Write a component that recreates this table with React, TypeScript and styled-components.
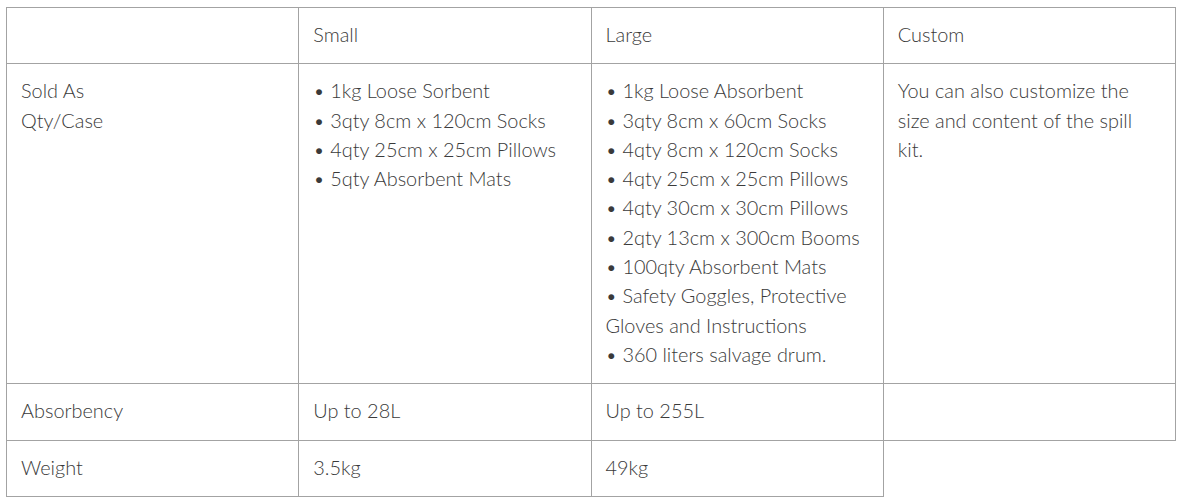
import React from "react";
import styled, { createGlobalStyle } from "styled-components";

const Global = createGlobalStyle`
  html, body { margin: 0; padding: 0; background: #fff; }
  body { font-family: "Lato", "Open Sans", sans-serif; }
`;

const Wrap = styled.div`
  padding: 7px 0 0 6px;
`;

const Table = styled.table`
  width: 1170px;
  table-layout: fixed;
  border-collapse: collapse;
  color: #3a3a3a;
  font-size: 19.9px;
  font-weight: 300;
  line-height: 29.3px;
`;

const Cell = styled.td`
  border: 1px solid #a3a3a3;
  padding: 12px 14px 14px 14px;
  vertical-align: top;
`;

const Line = styled.div``;

const rows: { label: string[]; cells: string[][] }[] = [
  { label: [""], cells: [["Small"], ["Large"], ["Custom"]] },
  {
    label: ["Sold As", "Qty/Case"],
    cells: [
      [
        "• 1kg Loose Sorbent",
        "• 3qty 8cm x 120cm Socks",
        "• 4qty 25cm x 25cm Pillows",
        "• 5qty Absorbent Mats",
      ],
      [
        "• 1kg Loose Absorbent",
        "• 3qty 8cm x 60cm Socks",
        "• 4qty 8cm x 120cm Socks",
        "• 4qty 25cm x 25cm Pillows",
        "• 4qty 30cm x 30cm Pillows",
        "• 2qty 13cm x 300cm Booms",
        "• 100qty Absorbent Mats",
        "• Safety Goggles, Protective Gloves and Instructions",
        "• 360 liters salvage drum.",
      ],
      ["You can also customize the size and content of the spill kit."],
    ],
  },
  { label: ["Absorbency"], cells: [["Up to 28L"], ["Up to 255L"], [""]] },
  { label: ["Weight"], cells: [["3.5kg"], ["49kg"]] },
];

export default function App() {
  return (
    <>
      <Global />
      <Wrap>
        <Table>
          <tbody>
            {rows.map((r, i) => (
              <tr key={i}>
                <Cell>
                  {r.label.map((l, j) => (
                    <Line key={j}>{l || "\u00a0"}</Line>
                  ))}
                </Cell>
                {r.cells.map((c, k) => (
                  <Cell key={k}>
                    {c.map((l, j) => (
                      <Line key={j}>{l || "\u00a0"}</Line>
                    ))}
                  </Cell>
                ))}
              </tr>
            ))}
          </tbody>
        </Table>
      </Wrap>
    </>
  );
}
